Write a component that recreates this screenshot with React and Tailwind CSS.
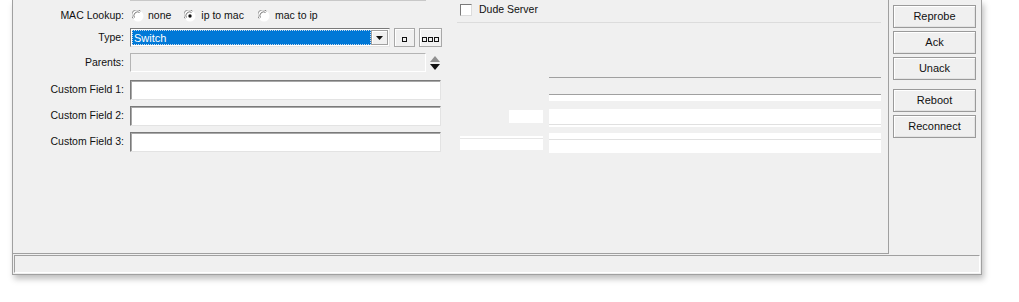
import React from "react";

const font = { fontFamily: '"Liberation Sans", Arial, sans-serif' };

function Radio({ checked }) {
  return (
    <svg width="12" height="12" viewBox="0 0 12 12" className="shrink-0">
      <circle cx="6" cy="6" r="5.5" fill="#ffffff" />
      <path d="M1.2 8.5 A5 5 0 0 1 8.5 1.2" fill="none" stroke="#8a8a8a" strokeWidth="1" />
      <path d="M2.4 7.6 A3.8 3.8 0 0 1 7.6 2.4" fill="none" stroke="#5a5a5a" strokeWidth="0.8" />
      {checked && <circle cx="6" cy="6" r="1.7" fill="#111" />}
    </svg>
  );
}

function Label({ children }) {
  return <div className="w-[111px] shrink-0 text-right text-[10.5px] text-[#111]">{children}</div>;
}

function Sunken({ className = "", children }) {
  return (
    <div
      className={
        "border-t border-l border-t-[#7a7a7a] border-l-[#7a7a7a] border-r border-b border-r-[#e3e3e3] border-b-[#e3e3e3] shadow-[inset_1px_1px_0_#a8a8a8] " +
        className
      }
    >
      {children}
    </div>
  );
}

function SmallBtn({ count, w }) {
  return (
    <div className={"h-[19px] " + w + " border border-[#a8a8a8] bg-[#f0f0f0] shadow-[inset_1px_1px_0_#ffffff] flex items-end justify-center pb-[4px] gap-[1px]"}>
      {Array.from({ length: count }).map((_, i) => (
        <div key={i} className="w-[5px] h-[5px] border border-[#111]" />
      ))}
    </div>
  );
}

function Btn({ children }) {
  return (
    <div className="h-[23px] w-[83px] border border-[#9a9a9a] bg-[#f0f0f0] shadow-[inset_1px_1px_0_#ffffff,inset_-1px_-1px_0_#e3e3e3] flex items-center justify-center text-[11px] text-[#111]">
      {children}
    </div>
  );
}

export default function App() {
  return (
    <div className="w-[1019px] h-[302px] bg-white overflow-hidden" style={font}>
      <div className="ml-[12px] w-[970px] h-[275px] bg-[#f0f0f0] border-l border-r border-b border-[#a0a0a0] shadow-[2px_4px_6px_rgba(0,0,0,0.25)] flex flex-col">
        <div className="flex h-[254px]">
          {/* main panel */}
          <div className="w-[876px] h-[254px] border-r border-b border-[#a0a0a0] flex">
            {/* left form */}
            <div className="w-[444px] flex flex-col">
              <div className="ml-[117px] w-[296px] h-[1px] bg-[#c8c8c8]" />
              <div className="h-[23px] mt-[3px] flex items-center">
                <Label>MAC Lookup:</Label>
                <div className="ml-[8px] flex items-center text-[10.5px] text-[#111]">
                  <Radio />
                  <span className="ml-[4px]">none</span>
                  <span className="ml-[13px]"><Radio checked /></span>
                  <span className="ml-[5px]">ip to mac</span>
                  <span className="ml-[14px]"><Radio /></span>
                  <span className="ml-[5px]">mac to ip</span>
                </div>
              </div>
              <div className="h-[19px] mt-[1px] flex items-center">
                <Label>Type:</Label>
                <div className="ml-[6px] w-[260px] h-[19px] border-t border-l border-[#7a7a7a] border-r border-b border-r-[#e3e3e3] border-b-[#e3e3e3] bg-white flex p-[1px]">
                  <div className="flex-1 bg-[#0078d7] border border-dotted border-[#c9d9ea] text-white text-[11px] leading-[14px] pl-[1px]">Switch</div>
                  <div className="w-[17px] bg-[#f0f0f0] border border-[#a0a0a0] shadow-[inset_1px_1px_0_#ffffff] flex items-center justify-center">
                    <svg width="7" height="4" viewBox="0 0 7 4"><path d="M0 0h7L3.5 4z" fill="#111" /></svg>
                  </div>
                </div>
                <div className="ml-[4px]"><SmallBtn count={1} w="w-[21px]" /></div>
                <div className="ml-[4px]"><SmallBtn count={3} w="w-[23px]" /></div>
              </div>
              <div className="h-[19px] mt-[6px] flex items-center">
                <Label>Parents:</Label>
                <div className="ml-[6px] w-[296px] h-[19px] border-t border-l border-[#b4b4b4] border-r border-b border-r-[#ffffff] border-b-[#ffffff] bg-[#f0f0f0]" />
                <svg width="10" height="16" viewBox="0 0 10 16" className="ml-[4px]">
                  <path d="M0 7h10L5 1z" fill="#8f8f8f" />
                  <path d="M0 9h10L5 15z" fill="#111" />
                </svg>
              </div>
              {["Custom Field 1:", "Custom Field 2:", "Custom Field 3:"].map((t, i) => (
                <div key={t} className={"h-[20px] flex items-center " + (i === 0 ? "mt-[8px]" : "mt-[6px]")}>
                  <Label>{t}</Label>
                  <Sunken className="ml-[6px] w-[311px] h-[20px] bg-white" />
                </div>
              ))}
            </div>
            {/* right column */}
            <div className="flex-1 flex flex-col">
              <div className="h-[17px] mt-[1px] ml-[3px] flex items-center gap-[7px]">
                <div className="w-[12px] h-[12px] bg-white border-t border-l border-[#7a7a7a] border-r border-b border-r-[#dcdcdc] border-b-[#dcdcdc]" />
                <span className="text-[10.5px] text-[#111]">Dude Server</span>
              </div>
              <div className="mt-[4px] mr-[7px] h-[1px] bg-[#dcdcdc]" />
              <div className="mt-[54px] ml-[92px] mr-[7px] h-[24px] flex flex-col">
                <div className="h-[1px] bg-[#a0a0a0]" />
                <div className="h-[16px]" />
                <div className="h-[1px] bg-[#a0a0a0]" />
                <div className="flex-1 bg-white" />
              </div>
              <div className="mt-[8px] flex h-[18px]">
                <div className="ml-[52px] mt-[1px] w-[34px] h-[13px] bg-white" />
                <div className="ml-[6px] mr-[7px] flex-1 flex flex-col bg-white">
                  <div className="flex-1" />
                  <div className="h-[1px] bg-[#e0e0e0]" />
                  <div className="h-[2px]" />
                </div>
              </div>
              <div className="mt-[6px] flex h-[20px]">
                <div className="ml-[3px] mt-[3px] w-[83px] h-[14px] bg-white flex flex-col">
                  <div className="h-[2px]" />
                  <div className="h-[1px] bg-[#e6e6e6]" />
                </div>
                <div className="ml-[6px] mr-[7px] flex-1 flex flex-col bg-white">
                  <div className="h-[6px]" />
                  <div className="h-[1px] bg-[#e0e0e0]" />
                </div>
              </div>
            </div>
          </div>
          {/* buttons */}
          <div className="flex-1 flex flex-col pl-[4px] pt-[5px] gap-[3px]">
            <Btn>Reprobe</Btn>
            <Btn>Ack</Btn>
            <Btn>Unack</Btn>
            <div className="h-[3px]" />
            <Btn>Reboot</Btn>
            <Btn>Reconnect</Btn>
          </div>
        </div>
        {/* status bar */}
        <div className="mt-[1px] ml-[1px] mr-[1px] h-[18px] border-t border-l border-[#a0a0a0] border-r border-b border-r-[#ffffff] border-b-[#ffffff]" />
      </div>
    </div>
  );
}
